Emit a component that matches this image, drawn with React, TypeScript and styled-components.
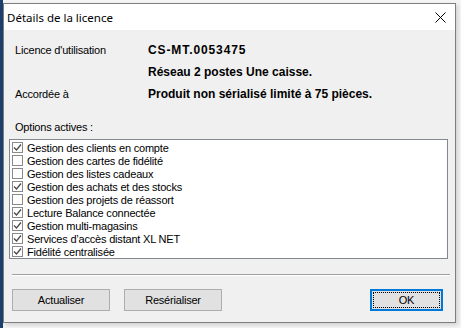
import React from "react";
import styled, { createGlobalStyle } from "styled-components";

const GlobalStyle = createGlobalStyle`
  html, body { margin: 0; padding: 0; }
  body {
    width: 461px;
    height: 328px;
    overflow: hidden;
    background: #f4f4f4;
    font-family: "Liberation Sans", Arial, sans-serif;
  }
`;

const Desktop = styled.div`
  width: 461px;
  height: 328px;
  display: flex;
  align-items: flex-start;
  background: linear-gradient(to right, #1d3f6e 0, #1d3f6e 3px, #f4f4f4 3px);
  padding: 3px 0 0 3px;
  box-sizing: border-box;
`;

const Dialog = styled.div`
  width: 453px;
  height: 320px;
  box-sizing: border-box;
  border: 1px solid #7e7e7e;
  background: #f0f0f0;
  display: flex;
  flex-direction: column;
  box-shadow: 2px 2px 4px rgba(0, 0, 0, 0.15);
`;

const TitleBar = styled.div`
  height: 26px;
  background: #ffffff;
  display: flex;
  align-items: center;
  justify-content: space-between;
  padding: 0 8px 0 3px;
`;

const Title = styled.span`
  font-family: "Noto Sans", "Liberation Sans", sans-serif;
  font-size: 11.5px;
  color: #000;
`;

const CloseButton = styled.div`
  width: 14px;
  height: 14px;
  display: flex;
  align-items: center;
  justify-content: center;
`;

const Body = styled.div`
  flex: 1;
  display: flex;
  flex-direction: column;
  padding: 9px 7px 0 5px;
  font-size: 11px;
  color: #000;
`;

const InfoGrid = styled.div`
  display: grid;
  grid-template-columns: 133px 1fr;
  grid-auto-rows: 22px;
  align-items: center;
  padding-left: 6px;
`;

const Label = styled.span`
  font-size: 11px;
  letter-spacing: -0.2px;
`;

const Value = styled.span<{ $wide?: boolean }>`
  font-size: 12px;
  font-weight: bold;
  letter-spacing: ${(p) => (p.$wide ? "0.9px" : "0")};
`;

const OptionsTitle = styled.div`
  margin-top: 16px;
  padding-left: 6px;
  height: 13px;
  line-height: 13px;
  letter-spacing: -0.2px;
`;

const ListBox = styled.div`
  margin-top: 5px;
  height: 120px;
  box-sizing: border-box;
  border: 1px solid #828790;
  background: #fff;
  padding: 1px 0 0 2px;
  display: flex;
  flex-direction: column;
`;

const Item = styled.div`
  height: 13px;
  display: flex;
  align-items: center;
  gap: 4px;
  letter-spacing: -0.2px;
  white-space: nowrap;
`;

const Box = styled.span`
  width: 11px;
  height: 11px;
  box-sizing: border-box;
  border: 1px solid #8a8a8a;
  background: #fff;
  display: flex;
  align-items: center;
  justify-content: center;
  flex: none;
`;

const Separator = styled.div`
  margin: 15px -2px 0 3px;
  height: 1px;
  background: #a0a0a0;
  border-bottom: 1px solid #fff;
`;

const ButtonRow = styled.div`
  display: flex;
  align-items: center;
  padding: 13px 0 0 3px;
  gap: 14px;
`;

const Button = styled.div<{ $default?: boolean }>`
  height: 22px;
  width: ${(p) => (p.$default ? "73px" : "98px")};
  margin-left: ${(p) => (p.$default ? "auto" : "0")};
  margin-right: ${(p) => (p.$default ? "5px" : "0")};
  box-sizing: border-box;
  border: ${(p) => (p.$default ? "2px solid #0078d7" : "1px solid #adadad")};
  background: #e1e1e1;
  display: flex;
  align-items: center;
  justify-content: center;
  font-size: 11px;
  letter-spacing: -0.2px;
  position: relative;
  ${(p) =>
    p.$default
      ? `&::after { content: ""; position: absolute; inset: 1px; border: 1px dotted #000; }`
      : ""}
`;

const Check = () => (
  <svg width="9" height="9" viewBox="0 0 9 9">
    <path d="M1 4.5 L3.5 7 L8 1.5" fill="none" stroke="#4a4a4a" strokeWidth="1.3" />
  </svg>
);

const options: [string, boolean][] = [
  ["Gestion des clients en compte", true],
  ["Gestion des cartes de fidélité", false],
  ["Gestion des listes cadeaux", false],
  ["Gestion des achats et des stocks", true],
  ["Gestion des projets de réassort", false],
  ["Lecture Balance connectée", true],
  ["Gestion multi-magasins", true],
  ["Services d’accès distant XL NET", true],
  ["Fidélité centralisée", true],
];

export default function App() {
  return (
    <>
      <GlobalStyle />
      <Desktop>
        <Dialog>
          <TitleBar>
            <Title>Détails de la licence</Title>
            <CloseButton>
              <svg width="11" height="11" viewBox="0 0 11 11">
                <path d="M0.5 0.5 L10.5 10.5 M10.5 0.5 L0.5 10.5" stroke="#000" strokeWidth="1" />
              </svg>
            </CloseButton>
          </TitleBar>
          <Body>
            <InfoGrid>
              <Label>Licence d'utilisation</Label>
              <Value $wide>CS-MT.0053475</Value>
              <span />
              <Value>Réseau 2 postes Une caisse.</Value>
              <Label>Accordée à</Label>
              <Value>Produit non sérialisé limité à 75 pièces.</Value>
            </InfoGrid>
            <OptionsTitle>Options actives :</OptionsTitle>
            <ListBox>
              {options.map(([name, on]) => (
                <Item key={name}>
                  <Box>{on && <Check />}</Box>
                  {name}
                </Item>
              ))}
            </ListBox>
            <Separator />
            <ButtonRow>
              <Button>Actualiser</Button>
              <Button>Resérialiser</Button>
              <Button $default>OK</Button>
            </ButtonRow>
          </Body>
        </Dialog>
      </Desktop>
    </>
  );
}
